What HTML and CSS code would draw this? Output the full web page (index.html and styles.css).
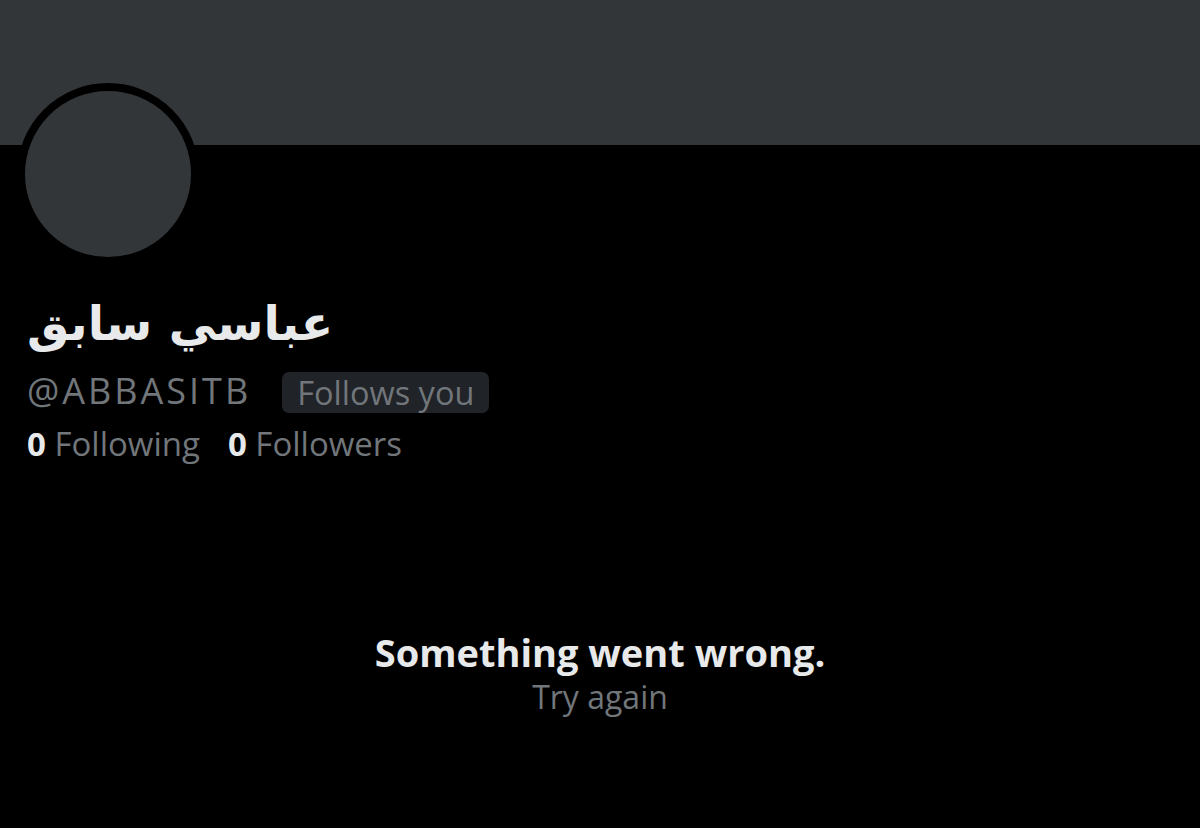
FILE: index.html
```html
<!DOCTYPE html>
<html lang="en">
<head>
<meta charset="UTF-8" />
<meta name="viewport" content="width=device-width, initial-scale=1.0"/>
<title>@ABBASITB</title>
<link rel="stylesheet" href="styles.css">
</head>
<body>

  <!-- Header banner -->
  <div class="banner"></div>

  <!-- Profile info -->
  <section class="profile">
    <div class="avatar-row">
      <div class="avatar"></div>
    </div>
    <h1 class="name" dir="rtl">عباسي سابق</h1>
    <div class="handle-row">
      <span class="handle">@ABBASITB</span>
      <span class="badge">Follows you</span>
    </div>
    <div class="stats">
      <span><b>0</b> Following</span>
      <span><b>0</b> Followers</span>
    </div>
  </section>

  <!-- Timeline error -->
  <div class="error">
    <p class="error-title">Something went wrong.</p>
    <p class="error-retry">Try again</p>
  </div>

</body>
</html>
```

FILE: styles.css
```css
:root {
  --banner: #333639;
  --text: #e7e9ea;
  --muted: #71767b;
  --badge: #202327;
}

body {
  margin: 0;
  background: #000;
  color: var(--text);
  font-family: 'Open Sans', 'Noto Sans', sans-serif;
  height: 828px;
  overflow: hidden;
}

.banner {
  height: 145px;
  background: var(--banner);
}

.profile {
  padding: 0 27px;
}

/* flex keeps the avatar's negative margin inside this row */
.avatar-row {
  display: flex;
  height: 142px;
  margin-left: -10px;
}

.avatar {
  flex: none;
  width: 166px;
  height: 166px;
  border-radius: 50%;
  background: var(--banner);
  border: 8px solid #000;
  margin-top: -62px;
}

.name {
  font-family: 'DejaVu Sans', sans-serif;
  font-weight: bold;
  font-size: 47.5px;
  line-height: 74px;
  margin: 0;
  display: inline-block;
}

.handle-row {
  display: flex;
  align-items: center;
  gap: 31px;
  height: 58px;
}

.handle {
  font-size: 36px;
  color: var(--muted);
  letter-spacing: 3px;
}

.badge {
  background: var(--badge);
  color: var(--muted);
  font-size: 32.5px;
  line-height: 41px;
  padding: 0 15px;
  border-radius: 7px;
  margin-top: 4px;
}

.stats {
  display: flex;
  gap: 28px;
  font-size: 33px;
  line-height: 50px;
  color: var(--muted);
}

.stats b {
  color: var(--text);
  font-weight: bold;
}

.error {
  text-align: center;
  margin-top: 160px;
}

.error-title {
  margin: 0;
  font-size: 38px;
  font-weight: bold;
  line-height: 46px;
}

.error-retry {
  margin: 0;
  font-size: 32px;
  line-height: 44px;
  color: var(--muted);
}
```
